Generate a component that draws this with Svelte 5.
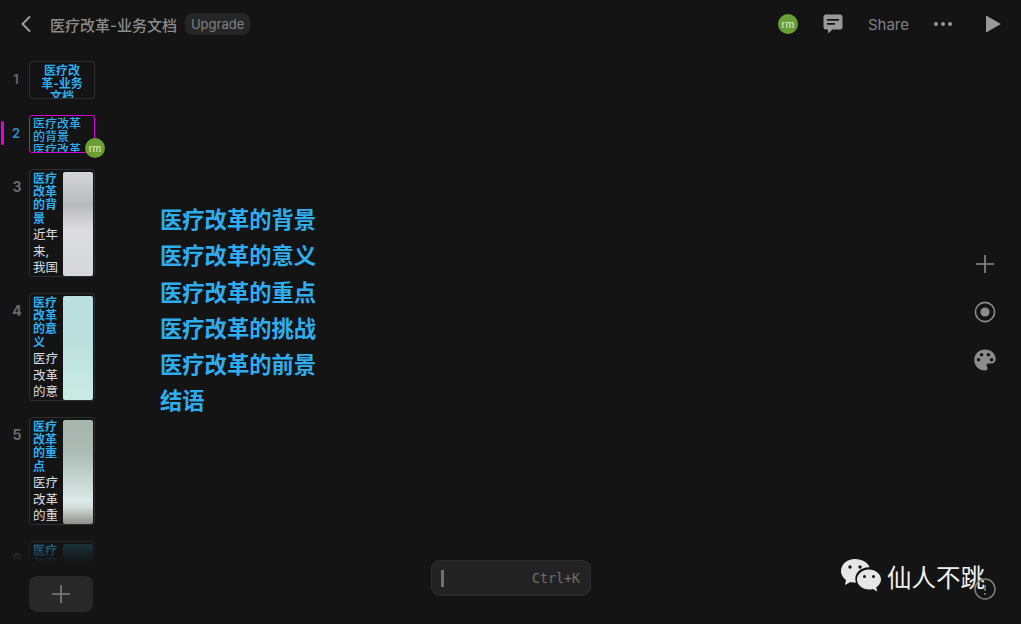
<script lang="ts">
  type Slide = {
    n: number;
    lines: string[];
    body?: string[];
    image?: string;
    kind: "cover" | "list" | "split";
  };

  const slides: Slide[] = [
    { n: 1, kind: "cover", lines: ["医疗改", "革-业务", "文档"] },
    { n: 2, kind: "list", lines: ["医疗改革", "的背景", "医疗改革"] },
    { n: 3, kind: "split", lines: ["医疗", "改革", "的背", "景"], body: ["近年", "来,", "我国"], image: "img-a" },
    { n: 4, kind: "split", lines: ["医疗", "改革", "的意", "义"], body: ["医疗", "改革", "的意"], image: "img-b" },
    { n: 5, kind: "split", lines: ["医疗", "改革", "的重", "点"], body: ["医疗", "改革", "的重"], image: "img-c" },
    { n: 6, kind: "split", lines: ["医疗", "改革", "的挑", "战"], body: ["医疗", "改革", "的挑"], image: "img-d" },
  ];

  const outline = [
    "医疗改革的背景",
    "医疗改革的意义",
    "医疗改革的重点",
    "医疗改革的挑战",
    "医疗改革的前景",
    "结语",
  ];
</script>

<div class="app">
  <header>
    <button class="back" aria-label="Back">
      <svg width="12" height="18" viewBox="0 0 12 18"><path d="M10 1.500 2.500 9l7.500 7.500" fill="none" stroke="#a3a3a3" stroke-width="1.8" /></svg>
    </button>
    <span class="doc-title">医疗改革-业务文档</span>
    <span class="upgrade">Upgrade</span>
    <div class="spacer"></div>
    <span class="avatar">rm</span>
    <svg class="comment" width="20" height="20" viewBox="0 0 20 20">
      <path fill-rule="evenodd" fill="#999" d="M3 .5h14A2.500 2.500 0 0 1 19.500 3v10a2.500 2.500 0 0 1-2.500 2.500H9.500L5 19.500v-4H3A2.500 2.500 0 0 1 .5 13V3A2.500 2.500 0 0 1 3 .5ZM4 5v1.800h12V5ZM4 9v1.800h8V9Z" />
    </svg>
    <span class="share">Share</span>
    <span class="dots"><i></i><i></i><i></i></span>
    <svg class="play" width="16" height="18" viewBox="0 0 16 18"><path d="M1 1.500v15a.7.7 0 0 0 1 .6L15 9.600a.7.7 0 0 0 0-1.200L2 .9a.7.7 0 0 0-1 .6Z" fill="#999" /></svg>
  </header>

  <div class="body">
    <aside>
      {#each slides as s}
        <div class="row" class:active={s.n === 2}>
          <span class="num" class:tall={s.kind === "split"}>{s.n}</span>
          <div class="thumb {s.kind}">
            {#if s.kind === "split"}
              <div class="col">
                <div class="t-title">
                  {#each s.lines as line}<div>{line}</div>{/each}
                </div>
                <div class="t-body">
                  {#each s.body ?? [] as line}<div>{line}</div>{/each}
                </div>
              </div>
              <div class="pic {s.image}"></div>
            {:else}
              <div class="t-title">
                {#each s.lines as line}<div>{line}</div>{/each}
              </div>
            {/if}
          </div>
          {#if s.n === 2}<span class="avatar small">rm</span>{/if}
        </div>
      {/each}
      <div class="fade"></div>
      <button class="add" aria-label="Add slide">
        <svg width="18" height="18" viewBox="0 0 18 18"><path d="M9 0v18M0 9h18" stroke="#808080" stroke-width="1.6" /></svg>
      </button>
    </aside>

    <main>
      <div class="outline">
        {#each outline as line}
          <div>{line}</div>
        {/each}
      </div>
      <div class="ask">
        <i class="caret"></i>
        <span>Ctrl+K</span>
      </div>
    </main>

    <nav>
      <svg width="20" height="20" viewBox="0 0 20 20"><path d="M10 1v18M1 10h18" stroke="#8c8c8c" stroke-width="1.6" /></svg>
      <svg width="22" height="22" viewBox="0 0 22 22"><circle cx="11" cy="11" r="9.600" fill="none" stroke="#8c8c8c" stroke-width="1.6" /><circle cx="11" cy="11" r="4.600" fill="#8c8c8c" /></svg>
      <svg width="22" height="22" viewBox="0 0 22 22">
        <path fill-rule="evenodd" fill="#8c8c8c" d="M11 .5C5 .5.3 5 .3 11S5 21.500 11 21.500c1.600 0 2.500-1 2.500-2.300 0-1.500-1-1.800-1-3 0-1.100.9-1.800 2-1.800h2.700c2.700 0 4.500-1.800 4.500-4.500C21.700 4.500 17 .5 11 .5ZM4.500 12.500a1.800 1.800 0 1 0 0-3.600 1.800 1.800 0 0 0 0 3.600ZM7.600 7.600a1.800 1.800 0 1 0 0-3.600 1.800 1.800 0 0 0 0 3.600ZM14.400 7.600a1.800 1.800 0 1 0 0-3.600 1.800 1.800 0 0 0 0 3.600ZM17.600 12.500a1.800 1.800 0 1 0 0-3.600 1.800 1.800 0 0 0 0 3.600Z" />
      </svg>
    </nav>
  </div>

  <div class="watermark">
    <svg width="42" height="36" viewBox="0 0 42 36">
      <path fill="#e6e6e6" d="M15 1C7 1 1 6.500 1 13c0 3.800 2 6.800 5 9l-1 5 5.500-3c1.500.4 3 .6 4.500.6h1c-.5-1.300-.7-2.500-.7-3.800 0-6.500 6-11.500 13.300-11.500h1C28.300 5 22.200 1 15 1Z" />
      <path fill="#e6e6e6" d="M29 11.500c-6.600 0-12 4.500-12 10s5.400 10 12 10c1.300 0 2.700-.2 3.900-.6l4.300 2.600-1-4.200c3-1.900 4.800-4.700 4.800-7.800 0-5.500-5.400-10-12-10Z" />
      <circle cx="10" cy="9" r="1.700" fill="#141414" /><circle cx="20" cy="9" r="1.700" fill="#141414" />
      <circle cx="24.500" cy="18.500" r="1.500" fill="#141414" /><circle cx="33.500" cy="18.500" r="1.500" fill="#141414" />
    </svg>
    <span>仙人不跳</span>
  </div>

  <svg class="help" width="22" height="22" viewBox="0 0 22 22">
    <circle cx="11" cy="11" r="10" fill="none" stroke="#808080" stroke-width="1.5" />
    <path d="M11 7v6" stroke="#808080" stroke-width="1.6" /><circle cx="11" cy="16" r="1.100" fill="#808080" />
  </svg>
</div>

<style>
  :global(body) {
    margin: 0;
    background: #141414;
  }

  .app {
    position: relative;
    width: 1021px;
    height: 624px;
    display: flex;
    flex-direction: column;
    overflow: hidden;
    background: #141414;
    font-family: Inter, "Noto Sans CJK SC", sans-serif;
  }

  header {
    height: 48px;
    flex-shrink: 0;
    display: flex;
    align-items: center;
    box-sizing: border-box;
    padding-left: 20px;
    padding-right: 20px;
  }

  .back {
    background: none;
    border: 0;
    padding: 0;
    display: flex;
    width: 30px;
  }

  .doc-title {
    font-size: 15px;
    color: #8c8c8c;
    font-weight: 500;
  }

  .upgrade {
    margin-left: 8px;
    padding: 0 6px;
    height: 22px;
    line-height: 22px;
    border-radius: 7px;
    background: #262626;
    color: #808080;
    font-size: 13px;
  }

  .spacer {
    flex: 1;
  }

  .avatar {
    width: 20px;
    height: 20px;
    border-radius: 50%;
    background: #6a9f35;
    color: #e6f0d8;
    font-size: 10px;
    line-height: 20px;
    text-align: center;
    flex-shrink: 0;
  }

  .comment {
    margin-left: 25px;
  }

  .share {
    margin-left: 25px;
    font-size: 15px;
    color: #808080;
  }

  .dots {
    margin-left: 25px;
    display: flex;
    gap: 3px;
  }

  .dots i {
    width: 4px;
    height: 4px;
    border-radius: 50%;
    background: #999;
  }

  .play {
    margin-left: 33px;
  }

  .body {
    flex: 1;
    min-height: 0;
    display: flex;
  }

  aside {
    position: relative;
    width: 120px;
    flex-shrink: 0;
    padding-top: 13px;
    display: flex;
    flex-direction: column;
    gap: 16px;
    overflow: hidden;
  }

  .row {
    position: relative;
    display: flex;
    flex-shrink: 0;
    padding-left: 29px;
  }

  .row.active::before {
    content: "";
    position: absolute;
    left: 1px;
    top: 6px;
    width: 3px;
    height: 24px;
    border-radius: 2px;
    background: #e000e0;
  }

  .num {
    position: absolute;
    left: 6px;
    width: 20px;
    top: 10px;
    text-align: center;
    font-size: 13px;
    font-weight: 600;
    line-height: 16px;
    color: #5e6b75;
  }

  .num.tall {
    top: 10px;
    left: 7px;
    font-size: 14px;
    font-weight: 700;
    color: #666b70;
  }

  .active .num {
    color: #2f8fc9;
  }

  .thumb {
    box-sizing: border-box;
    width: 66px;
    height: 38px;
    border: 1px solid #2e2e2e;
    border-radius: 3px;
    overflow: hidden;
    background: #141414;
  }

  .t-title {
    color: #2eaef0;
    font-size: 12px;
    line-height: 13.2px;
    font-weight: 700;
  }

  .cover .t-title {
    text-align: center;
    padding-top: 2px;
  }

  .list {
    border-color: #d800d8;
  }

  .list .t-title {
    padding: 1px 0 0 3px;
    font-weight: 500;
  }

  .split {
    height: 108px;
    display: flex;
    gap: 4px;
    padding: 2px 1px 0 3px;
  }

  .col {
    width: 26px;
    flex-shrink: 0;
  }

  .t-body {
    margin-top: 2px;
    color: #d9dee2;
    font-size: 12.5px;
    line-height: 16.7px;
  }

  .pic {
    flex: 1;
    height: 104px;
    border-radius: 2px;
  }

  .img-a {
    background: linear-gradient(#d4d5d8, #b9babd 32%, #dcdce0 55%, #d6d8dc);
  }

  .img-b {
    background: linear-gradient(#b9dfdf, #bbe1df 45%, #c9ebe5);
  }

  .img-c {
    background: linear-gradient(#a6b5ad, #aabab4 30%, #dcebe7 78%, #d5dcd9 84%, #8d8d8b);
  }

  .img-d {
    background: linear-gradient(#1e4a58, #1e4a58);
  }

  .avatar.small {
    position: absolute;
    left: 85px;
    top: 23px;
  }

  .fade {
    position: absolute;
    left: 0;
    right: 0;
    bottom: 0;
    height: 86px;
    background: linear-gradient(rgba(20, 20, 20, 0.25), #141414 28%);
  }

  .add {
    position: absolute;
    left: 29px;
    bottom: 12px;
    width: 64px;
    height: 36px;
    border: 0;
    border-radius: 8px;
    background: #282828;
    display: flex;
    align-items: center;
    justify-content: center;
    padding: 0;
  }

  main {
    position: relative;
    flex: 1;
    padding: 154px 0 0 40px;
  }

  .outline {
    color: #2eaef0;
    font-size: 22.3px;
    line-height: 36.3px;
    font-weight: 700;
  }

  .ask {
    position: absolute;
    left: 311px;
    bottom: 28px;
    box-sizing: border-box;
    width: 160px;
    height: 36px;
    border: 1px solid #2e2e2e;
    border-radius: 9px;
    background: #232323;
    display: flex;
    align-items: center;
    justify-content: space-between;
    padding: 0 10px 0 9px;
    font-family: "DejaVu Sans Mono", monospace;
    font-size: 13.3px;
    color: #6e6e6e;
  }

  .caret {
    width: 3px;
    height: 17px;
    background: #707070;
  }

  nav {
    width: 72px;
    flex-shrink: 0;
    display: flex;
    flex-direction: column;
    align-items: center;
    gap: 26.5px;
    padding-top: 206px;
    box-sizing: border-box;
  }

  .watermark {
    position: absolute;
    left: 840px;
    top: 558px;
    display: flex;
    align-items: center;
    gap: 5px;
    color: #f0f0f0;
    font-size: 24.5px;
  }

  .help {
    position: absolute;
    left: 974px;
    top: 578px;
  }
</style>
